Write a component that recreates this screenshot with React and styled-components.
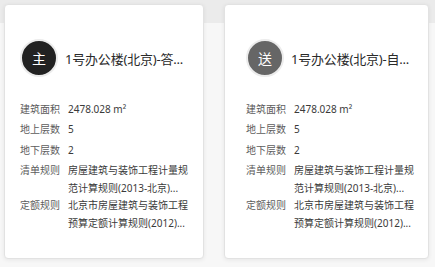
import React from 'react';
import styled, { createGlobalStyle } from 'styled-components';

/* ───────────── global ───────────── */

const GlobalStyle = createGlobalStyle`
  html, body {
    margin: 0;
    padding: 0;
    background: #f6f6f6;
  }
  body {
    font-family: "Noto Sans", "Noto Sans CJK SC", sans-serif;
  }
`;

/* ───────────── styled‑components ───────────── */

const Page = styled.div`
  width: 435px;
  height: 267px;
  box-sizing: border-box;
  padding: 4px 0 0 4px;
  display: flex;
  gap: 20px;
  align-items: flex-start;
  background: linear-gradient(#ebebeb 0, #ebebeb 23px, #f7f7f7 23px, #f7f7f7 100%);
  overflow: hidden;
`;

const Card = styled.div`
  width: ${({ $width }) => $width}px;
  height: 255px;
  box-sizing: border-box;
  padding: 34px 12px 0 ${({ $inset }) => $inset}px;
  background: #fff;
  border: 1px solid #e2e2e2;
  border-radius: 4px;
  box-shadow: 0 1px 4px rgba(0, 0, 0, 0.07);
  display: flex;
  flex-direction: column;
`;

const Header = styled.div`
  display: flex;
  align-items: center;
  gap: 7px;
  height: 38px;
`;

const Avatar = styled.div`
  width: 34px;
  height: 34px;
  flex: none;
  border-radius: 50%;
  border: 2px solid #ececec;
  background: ${({ $tone }) => $tone};
  color: #fff;
  font-size: 14px;
  display: flex;
  align-items: center;
  justify-content: center;
`;

const Title = styled.div`
  font-size: 13px;
  font-weight: 400;
  color: #2a2a2a;
  white-space: nowrap;
  letter-spacing: -0.2px;
`;

const Rows = styled.div`
  margin-top: 23.5px;
  display: flex;
  flex-direction: column;
`;

const Row = styled.div`
  display: flex;
  min-height: 20.5px;
  font-size: 10px;
  line-height: 17.5px;
`;

const Label = styled.div`
  width: 48px;
  flex: none;
  color: #5c5c5c;
`;

const Value = styled.div`
  width: 122px;
  color: #3a3a3a;
  word-break: break-all;
`;

/* ───────────── data ───────────── */

const projects = [
  {
    badge: '主',
    tone: '#222',
    title: '1号办公楼(北京)-答...',
    width: 200,
    inset: 15,
  },
  {
    badge: '送',
    tone: '#666',
    title: '1号办公楼(北京)-自...',
    width: 205,
    inset: 21,
  },
];

const details = [
  ['建筑面积', '2478.028 m²'],
  ['地上层数', '5'],
  ['地下层数', '2'],
  ['清单规则', '房屋建筑与装饰工程计量规范计算规则(2013-北京)...'],
  ['定额规则', '北京市房屋建筑与装饰工程预算定额计算规则(2012)...'],
];

/* ───────────── component ───────────── */

function ProjectCard({ project }) {
  return (
    <Card $width={project.width} $inset={project.inset}>
      <Header>
        <Avatar $tone={project.tone}>{project.badge}</Avatar>
        <Title>{project.title}</Title>
      </Header>
      <Rows>
        {details.map(([label, value]) => (
          <Row key={label}>
            <Label>{label}</Label>
            <Value>{value}</Value>
          </Row>
        ))}
      </Rows>
    </Card>
  );
}

export default function App() {
  return (
    <>
      <GlobalStyle />
      <Page>
        {projects.map((p) => (
          <ProjectCard key={p.badge} project={p} />
        ))}
      </Page>
    </>
  );
}
